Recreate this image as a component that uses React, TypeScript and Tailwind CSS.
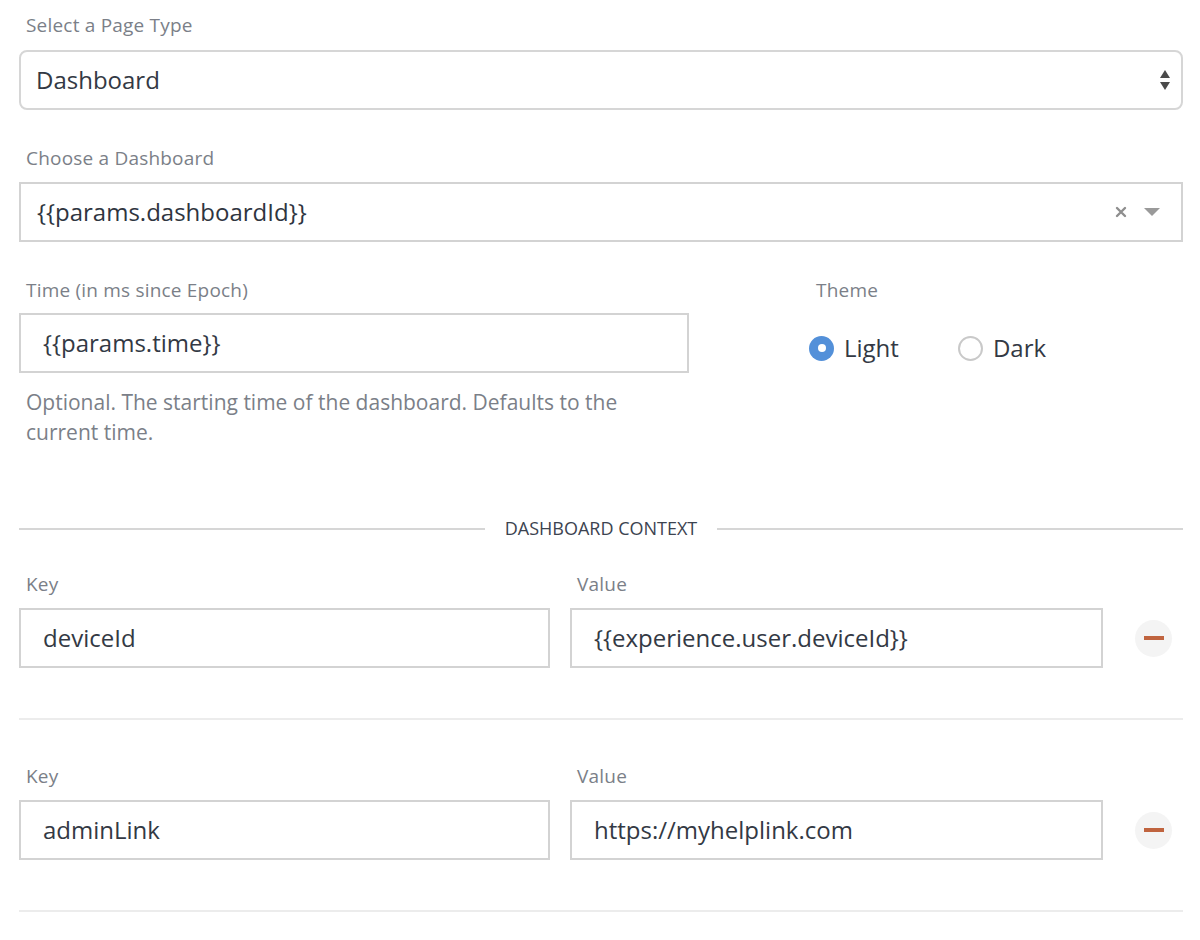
import React from 'react';

const font = { fontFamily: '"Open Sans", "Noto Sans", sans-serif' };

function Label({ children }: { children: React.ReactNode }) {
  return (
    <div className="pl-[7px] text-[19px] leading-[24px] tracking-[0.2px] text-[#7b7f88]">
      {children}
    </div>
  );
}

function TextBox({ value }: { value: string }) {
  return (
    <div className="flex h-[60px] items-center border-2 border-[#d3d3d3] bg-white pl-[22px] text-[24px] text-[#333944]">
      {value}
    </div>
  );
}

function RemoveButton() {
  return (
    <button className="flex h-[37px] w-[37px] items-center justify-center rounded-full bg-[#f4f4f4]">
      <span className="block h-[4px] w-[20px] bg-[#c0643f]" />
    </button>
  );
}

function ContextRow({ k, v }: { k: string; v: string }) {
  return (
    <div className="border-b-2 border-[#ececec] pb-[50px] pt-[44px]">
      <div className="flex items-start">
        <div className="w-[531px]">
          <Label>Key</Label>
          <div className="mt-[12px]">
            <TextBox value={k} />
          </div>
        </div>
        <div className="ml-[20px] w-[533px]">
          <Label>Value</Label>
          <div className="mt-[12px]">
            <TextBox value={v} />
          </div>
        </div>
        <div className="flex h-[60px] flex-1 items-center justify-end self-end pr-[11px]">
          <RemoveButton />
        </div>
      </div>
    </div>
  );
}

export default function App() {
  return (
    <div className="min-h-[940px] bg-white pl-[19px] pr-[17px] pt-[13px]" style={font}>
      <Label>Select a Page Type</Label>
      <div className="mt-[13px] flex h-[60px] items-center justify-between rounded-[8px] border-2 border-[#d6d6d6] pl-[15px] pr-[10px] text-[24px] text-[#333944]">
        <span>Dashboard</span>
        <svg width="12" height="24" viewBox="0 0 12 24">
          <path d="M6 2 L11 10 L1 10 Z" fill="#4a4a4a" />
          <path d="M1 14 L11 14 L6 22 Z" fill="#4a4a4a" />
        </svg>
      </div>

      <div className="mt-[36px]">
        <Label>Choose a Dashboard</Label>
      </div>
      <div className="mt-[12px] flex h-[60px] items-center justify-between border-2 border-[#d3d3d3] pl-[16px] pr-[20px] text-[24px] text-[#2f353f]">
        <span>{'{{params.dashboardId}}'}</span>
        <div className="flex items-center gap-[16px]">
          <svg width="12" height="12" viewBox="0 0 12 12">
            <path d="M2 2 L10 10 M10 2 L2 10" stroke="#8e8e8e" strokeWidth="2.4" strokeLinecap="round" />
          </svg>
          <svg width="18" height="10" viewBox="0 0 18 10">
            <path d="M1 1 L17 1 L9 9 Z" fill="#9a9a9a" />
          </svg>
        </div>
      </div>

      <div className="mt-[36px] flex items-start">
        <div className="w-[670px]">
          <Label>Time (in ms since Epoch)</Label>
          <div className="mt-[11px]">
            <TextBox value="{{params.time}}" />
          </div>
          <p className="mt-[14px] pl-[7px] text-[21px] leading-[30px] text-[#7b7f88]">
            Optional. The starting time of the dashboard. Defaults to the
            <br />
            current time.
          </p>
        </div>
        <div className="ml-[120px]">
          <Label>Theme</Label>
          <div className="mt-[28px] flex items-center text-[24px] text-[#333944]">
            <label className="flex items-center">
              <span className="flex h-[25px] w-[25px] items-center justify-center rounded-full bg-[#5390d9]">
                <span className="h-[8px] w-[8px] rounded-full bg-white" />
              </span>
              <span className="ml-[10px]">Light</span>
            </label>
            <label className="ml-[59px] flex items-center">
              <span className="h-[25px] w-[25px] rounded-full border-2 border-[#c9c9c9] bg-white" />
              <span className="ml-[10px]">Dark</span>
            </label>
          </div>
        </div>
      </div>

      <div className="mt-[68px] flex items-center">
        <div className="h-[2px] flex-1 bg-[#d6d6d6]" />
        <span className="px-[20px] text-[18px] uppercase text-[#3c4350]">Dashboard Context</span>
        <div className="h-[2px] flex-1 bg-[#d6d6d6]" />
      </div>

      <div className="-mt-[14px]">
        <ContextRow k="deviceId" v="{{experience.user.deviceId}}" />
        <ContextRow k="adminLink" v="https://myhelplink.com" />
      </div>
    </div>
  );
}
